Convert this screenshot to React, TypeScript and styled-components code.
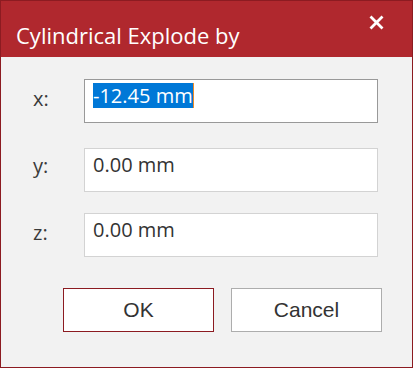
import React from "react";
import styled, { createGlobalStyle } from "styled-components";

const Global = createGlobalStyle`
  html, body { margin: 0; padding: 0; background: #f2f2f2; }
  body { font-family: "Open Sans", "Noto Sans", sans-serif; }
`;

const Window = styled.div`
  width: 413px;
  height: 368px;
  box-sizing: border-box;
  border: 1px solid #8c1b21;
  background: #f2f2f2;
  display: flex;
  flex-direction: column;
`;

const TitleBar = styled.div`
  flex: 0 0 56px;
  height: 56px;
  box-sizing: border-box;
  background: #b0282e;
  display: flex;
  justify-content: space-between;
  align-items: flex-start;
  padding: 0 28px 0 15px;
`;

const Title = styled.div`
  margin-top: 20px;
  font-family: "Open Sans", "Noto Sans", sans-serif;
  font-size: 22px;
  line-height: 28px;
  color: #ffffff;
`;

const CloseButton = styled.button`
  margin-top: 14px;
  width: 15px;
  height: 15px;
  padding: 0;
  border: 0;
  background: transparent;
  display: flex;
  cursor: pointer;
`;

const Body = styled.div`
  display: flex;
  flex-direction: column;
  padding: 0 0 0 32px;
`;

const FieldRow = styled.div<{ $top: number }>`
  display: grid;
  grid-template-columns: 51px 294px;
  margin-top: ${(p) => p.$top}px;
`;

const Label = styled.div<{ $pad: number }>`
  padding-top: ${(p) => p.$pad}px;
  font-size: 20px;
  line-height: 27px;
  color: #3a3a3a;
`;

const Field = styled.div<{ $focused?: boolean }>`
  height: 44px;
  box-sizing: border-box;
  background: #ffffff;
  border: 1px solid ${(p) => (p.$focused ? "#999999" : "#d3d3d3")};
  padding: ${(p) => (p.$focused ? "2px" : "2px")} 8px 0 8px;
  font-size: 20px;
  line-height: 27px;
  color: #333333;
  white-space: nowrap;
`;

const Selected = styled.span`
  display: inline-block;
  line-height: 25px;
  background: #0078d7;
  color: #ffffff;
  border-right: 1px solid #f08a24;
`;

const ButtonRow = styled.div`
  display: flex;
  gap: 17px;
  margin-top: 31px;
  padding-left: 30px;
`;

const Button = styled.button<{ $primary?: boolean }>`
  width: 151px;
  height: 44px;
  box-sizing: border-box;
  padding: 0;
  background: #ffffff;
  border: 1px solid ${(p) => (p.$primary ? "#8c1b21" : "#adadad")};
  font-family: "Liberation Sans", Arial, sans-serif;
  font-size: 21px;
  color: #333333;
  cursor: pointer;
`;

export default function App() {
  return (
    <>
      <Global />
      <Window>
        <TitleBar>
          <Title>Cylindrical Explode by</Title>
          <CloseButton aria-label="Close">
            <svg width="15" height="15" viewBox="0 0 15 15">
              <path d="M1.5 1.5 L13.5 13.5 M13.5 1.5 L1.5 13.5" stroke="#ffffff" strokeWidth="2.8" fill="none" />
            </svg>
          </CloseButton>
        </TitleBar>
        <Body>
          <FieldRow $top={22}>
            <Label $pad={6}>x:</Label>
            <Field $focused>
              <Selected>-12.45 mm</Selected>
            </Field>
          </FieldRow>
          <FieldRow $top={25}>
            <Label $pad={4}>y:</Label>
            <Field>0.00 mm</Field>
          </FieldRow>
          <FieldRow $top={21}>
            <Label $pad={6}>z:</Label>
            <Field>0.00 mm</Field>
          </FieldRow>
          <ButtonRow>
            <Button $primary>OK</Button>
            <Button>Cancel</Button>
          </ButtonRow>
        </Body>
      </Window>
    </>
  );
}
